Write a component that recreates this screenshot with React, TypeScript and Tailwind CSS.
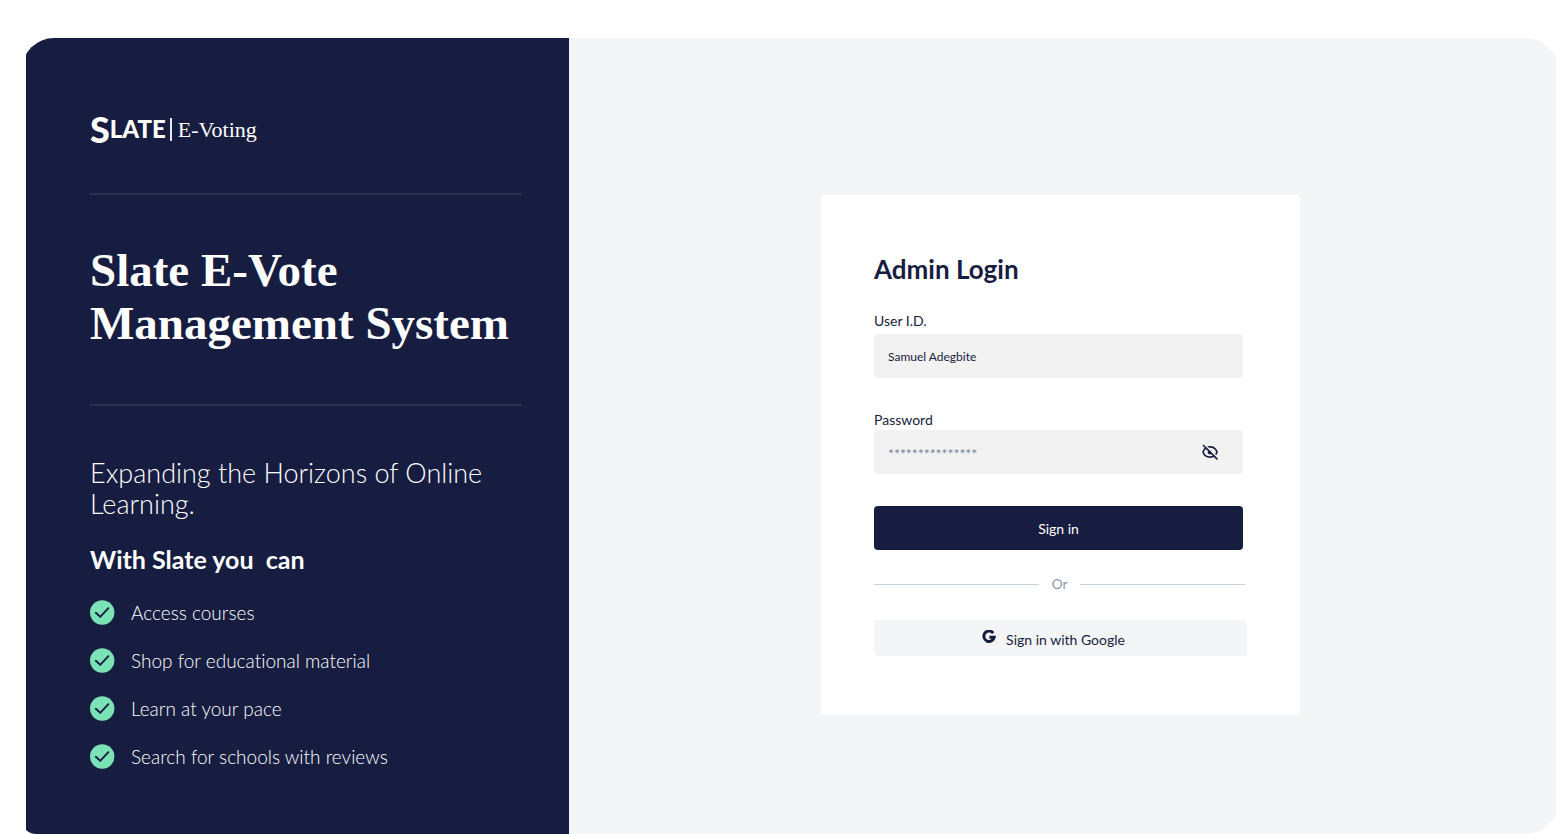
import { useState } from "react";

const features = [
  "Access courses",
  "Shop for educational material",
  "Learn at your pace",
  "Search for schools with reviews",
];

function Logo() {
  return (
    <div className="flex h-9 items-center text-white">
      <span className="flex items-center font-black leading-9">
        <span className="text-[36px]">S</span>
        <span className="text-[24px]">LATE</span>
      </span>
      <span className="ml-1 h-[23px] w-[2px] bg-white/90"></span>
      <span className="ml-[6px] font-['Liberation_Serif',serif] text-[22px]">E-Voting</span>
    </div>
  );
}

function CheckBadge() {
  return (
    <svg viewBox="0 0 25 25" className="size-[25px] shrink-0" aria-hidden="true">
      <circle cx="12.2" cy="12.5" r="12.2" fill="#7ae2b6" />
      <path d="M5.8 12.8l4.4 4 8.2-8.6" fill="none" stroke="#171d40" strokeWidth="1.9" strokeLinecap="round" strokeLinejoin="round" />
    </svg>
  );
}

function GoogleMark() {
  return (
    <svg viewBox="0 0 14 14" className="mb-[6px] size-[14px]" aria-hidden="true">
      <path d="M11.2 3.1A5.2 5.2 0 1 0 12.2 7.2H7.4" fill="none" stroke="currentColor" strokeWidth="3" />
    </svg>
  );
}

function EyeIcon({ off }: { off: boolean }) {
  return (
    <svg viewBox="0 0 18 18" className="size-[18px]" fill="none" stroke="currentColor" strokeWidth="1.6" aria-hidden="true">
      <path d="M2 9C3.2 5.4 5.8 3.9 9 3.9S14.8 5.4 16 9C14.8 12.6 12.2 14.1 9 14.1S3.2 12.6 2 9Z" />
      <circle cx="9" cy="9.2" r="2.2" fill="currentColor" stroke="none" />
      {off && (
        <>
          <path d="M3.1 1L17.3 15.2" stroke="#f2f2f2" strokeWidth="1.6" />
          <path d="M2 2L16.4 16.4" />
        </>
      )}
    </svg>
  );
}

function BrandPanel() {
  return (
    <section className="w-[543px] shrink-0 bg-[#171d40] pl-16 pr-[47px] pt-[73px] text-white">
      <Logo />
      <hr className="mt-[46px] border-t-2 border-[#2a3052]" />
      <h1 className="mt-[49px] font-['Liberation_Serif',serif] text-[47px] font-bold leading-[53px]">
        Slate E-Vote Management System
      </h1>
      <hr className="mt-[54px] border-t-2 border-[#2a3052]" />
      <p className="mt-[51px] text-[27px] font-light leading-[31px]">
        Expanding the Horizons of Online Learning.
      </p>
      <h2 className="mt-6 whitespace-pre text-[25px] font-bold leading-8">With Slate you  can</h2>
      <ul className="mt-[25px] space-y-[23px]">
        {features.map((f) => (
          <li key={f} className="flex items-center gap-4 text-[19px] font-light leading-[25px]">
            <CheckBadge />
            {f}
          </li>
        ))}
      </ul>
    </section>
  );
}

function LoginCard() {
  const [userId, setUserId] = useState("Samuel Adegbite");
  const [password, setPassword] = useState("");
  const [visible, setVisible] = useState(false);

  return (
    <form
      onSubmit={(e) => e.preventDefault()}
      className="w-[479px] rounded-[4px] bg-white px-[53px] pb-[59px] pt-[58px] text-[#171d40]"
    >
      <h2 className="text-[26px] font-bold leading-8">Admin Login</h2>

      <div className="mr-1 mt-[25px]">
        <label htmlFor="user-id" className="mb-[3px] block text-[14px] leading-[21px]">User I.D.</label>
        <input
          id="user-id"
          type="text"
          value={userId}
          onChange={(e) => setUserId(e.target.value)}
          className="h-11 w-full rounded-[4px] bg-[#f2f2f2] px-[14px] text-[12px] outline-none"
        />
      </div>

      <div className="mr-1 mt-[31px]">
        <label htmlFor="password" className="block text-[14px] leading-[21px]">Password</label>
        <div className="flex h-11 items-center rounded-[4px] bg-[#f2f2f2] pl-[14px] pr-6">
          <input
            id="password"
            type={visible ? "text" : "password"}
            value={password}
            placeholder="***************"
            onChange={(e) => setPassword(e.target.value)}
            className="min-w-0 flex-1 bg-transparent pt-[2px] text-[14px] outline-none placeholder:text-[#73879c]"
          />
          <button type="button" aria-label="Toggle password visibility" onClick={() => setVisible(!visible)}>
            <EyeIcon off={!visible} />
          </button>
        </div>
      </div>

      <div className="mr-1 mt-8">
        <button type="submit" className="h-11 w-full rounded-[4px] bg-[#171d40] text-[14px] text-white">
          Sign in
        </button>
      </div>

      <div className="mr-[2px] mt-6 flex items-center gap-3 text-[14px] leading-5 text-[#8a9bae]">
        <span className="h-px flex-1 bg-[#cbd3da]"></span>
        Or
        <span className="h-px flex-1 bg-[#cbd3da]"></span>
      </div>

      <button
        type="button"
        className="mt-[26px] flex h-9 w-full items-center justify-center gap-[10px] rounded-[4px] bg-[#f4f5f7] pr-[14px] pt-[3px] text-[14px]"
      >
        <GoogleMark />
        Sign in with Google
      </button>
    </form>
  );
}

export default function App() {
  return (
    <div className="flex min-h-screen bg-white pl-[22px] pr-[2px] pt-[38px] font-['Lato',sans-serif] [font-variant-ligatures:none]">
      <main className="flex flex-1 overflow-hidden rounded-[32px] rounded-bl-[14px] pl-1 pr-[2px]">
        <BrandPanel />
        <div className="flex flex-1 items-center justify-center bg-[#f4f5f7] pr-1 pt-[38px]">
          <LoginCard />
        </div>
      </main>
    </div>
  );
}
